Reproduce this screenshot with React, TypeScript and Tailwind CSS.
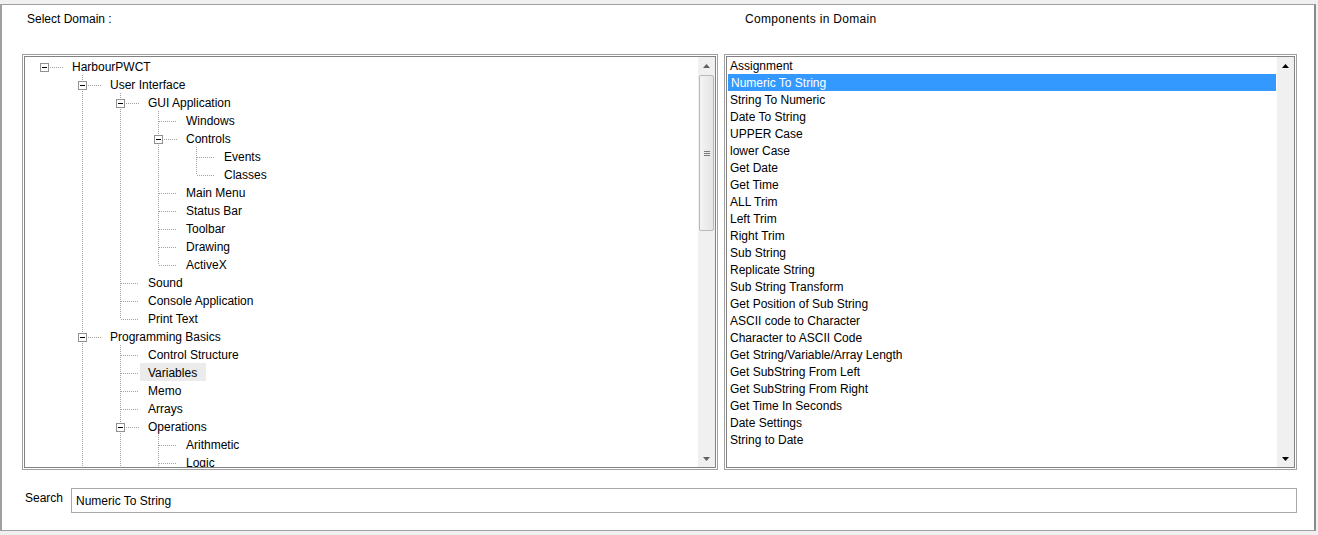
type TreeNode = { label: string; children?: TreeNode[] };

const tree: TreeNode[] = [
  {
    label: "HarbourPWCT",
    children: [
      {
        label: "User Interface",
        children: [
          {
            label: "GUI Application",
            children: [
              { label: "Windows" },
              { label: "Controls", children: [{ label: "Events" }, { label: "Classes" }] },
              { label: "Main Menu" },
              { label: "Status Bar" },
              { label: "Toolbar" },
              { label: "Drawing" },
              { label: "ActiveX" },
            ],
          },
          { label: "Sound" },
          { label: "Console Application" },
          { label: "Print Text" },
        ],
      },
      {
        label: "Programming Basics",
        children: [
          { label: "Control Structure" },
          { label: "Variables" },
          { label: "Memo" },
          { label: "Arrays" },
          {
            label: "Operations",
            children: [{ label: "Arithmetic" }, { label: "Logic" }, { label: "Relational" }],
          },
          { label: "Functions" },
        ],
      },
      { label: "Database" },
    ],
  },
];

const components = [
  "Assignment",
  "Numeric To String",
  "String To Numeric",
  "Date To String",
  "UPPER Case",
  "lower Case",
  "Get Date",
  "Get Time",
  "ALL Trim",
  "Left Trim",
  "Right Trim",
  "Sub String",
  "Replicate String",
  "Sub String Transform",
  "Get Position of Sub String",
  "ASCII code to Character",
  "Character to ASCII Code",
  "Get String/Variable/Array Length",
  "Get SubString From Left",
  "Get SubString From Right",
  "Get Time In Seconds",
  "Date Settings",
  "String to Date",
];

type Row = {
  label: string;
  depth: number;
  box: boolean;
  top: boolean;
  bottom: boolean;
  through: boolean[];
};

const flatten = (nodes: TreeNode[], depth: number, through: boolean[], out: Row[]) => {
  nodes.forEach((n, i) => {
    const hasNext = i < nodes.length - 1;
    out.push({
      label: n.label,
      depth,
      box: !!n.children,
      top: depth > 0 || i > 0,
      bottom: hasNext,
      through,
    });
    if (n.children) flatten(n.children, depth + 1, [...through, hasNext], out);
  });
  return out;
};

const rows = flatten(tree, 0, [], []);

const LINE = "#a0a0a0";

// one 38px indent column of the tree: dotted connector lines and the +/- box
const Cell = ({ row, col }: { row: Row; col: number }) => {
  const own = col === row.depth;
  return (
    <svg width="38" height="18" className="shrink-0" shapeRendering="crispEdges">
      {!own && row.through[col] && (
        <line x1="19.5" y1="0" x2="19.5" y2="18" stroke={LINE} strokeDasharray="1 1" />
      )}
      {own && row.top && <line x1="19.5" y1="0" x2="19.5" y2="10" stroke={LINE} strokeDasharray="1 1" />}
      {own && row.bottom && (
        <line x1="19.5" y1="10" x2="19.5" y2="18" stroke={LINE} strokeDasharray="1 1" />
      )}
      {own && (
        <line
          x1={row.box ? 25 : 20}
          y1="10.5"
          x2="38"
          y2="10.5"
          stroke={LINE}
          strokeDasharray="1 1"
        />
      )}
      {own && row.box && (
        <g>
          <rect x="15.5" y="6.5" width="8" height="8" fill="#fff" stroke="#919191" />
          <line x1="17" y1="10.5" x2="22" y2="10.5" stroke="#000" />
        </g>
      )}
    </svg>
  );
};

const Scrollbar = ({ thumb }: { thumb?: boolean }) => (
  <div className="w-[17px] shrink-0 bg-[#f0f0f0] flex flex-col items-center">
    <div className="h-[17px] w-full flex items-center justify-center">
      <svg width="7" height="4">
        <path d="M3.5 0 L7 4 L0 4 Z" fill={thumb ? "#606060" : "#000"} />
      </svg>
    </div>
    {thumb && (
      <div className="mt-[1px] h-[156px] w-[15px] rounded-[2px] border border-[#b8b8b8] bg-gradient-to-r from-[#f4f4f4] to-[#e4e4e4] flex flex-col items-center justify-center gap-[1px]">
        <div className="h-px w-[6px] bg-[#7a7a7a]" />
        <div className="h-px w-[6px] bg-[#7a7a7a]" />
        <div className="h-px w-[6px] bg-[#7a7a7a]" />
      </div>
    )}
    <div className="flex-1" />
    <div className="h-[17px] w-full flex items-center justify-center">
      <svg width="7" height="4">
        <path d="M0 0 L7 0 L3.5 4 Z" fill={thumb ? "#606060" : "#000"} />
      </svg>
    </div>
  </div>
);

const Frame = ({ children, className }: { children: React.ReactNode; className?: string }) => (
  <div className={`border border-[#a0a0a0] bg-white p-px ${className ?? ""}`}>
    <div className="h-full border border-[#828282] flex overflow-hidden">{children}</div>
  </div>
);

export default function App() {
  return (
    <div
      className="w-[1318px] h-[535px] bg-[#f0f0f0] pt-[4px] pr-[2px] pb-[4px] text-[12px] text-black"
      style={{ fontFamily: '"Liberation Sans", Arial, sans-serif' }}
    >
      <div className="h-full bg-white border-t border-t-[#a0a0a0] border-l-2 border-l-[#a0a0a0] border-r-2 border-r-[#8a8a8a] border-b border-b-[#a0a0a0] flex flex-col">
        <div className="h-[49px] flex pl-[20px] pr-[17px]">
          <div className="w-[702px] pl-[5px] pt-[7px] leading-[14px]">Select Domain :</div>
          <div className="flex-1 pl-[21px] pt-[7px] leading-[14px] tracking-[0.3px]">Components in Domain</div>
        </div>

        <div className="h-[416px] flex gap-[6px] pl-[20px] pr-[17px]">
          <Frame className="w-[696px]">
            <div className="flex-1 overflow-hidden">
              {rows.map((r, i) => (
                <div key={i} className="h-[18px] flex items-start">
                  {Array.from({ length: r.depth + 1 }).map((_, c) => (
                    <Cell key={c} row={r} col={c} />
                  ))}
                  <div
                    className={`h-[18px] ml-px pl-[8px] pr-[9px] leading-[20px] whitespace-nowrap ${
                      r.label === "Variables" ? "bg-[#ebebeb]" : ""
                    }`}
                  >
                    {r.label}
                  </div>
                </div>
              ))}
            </div>
            <Scrollbar thumb />
          </Frame>

          <Frame className="flex-1">
            <div className="flex-1 overflow-hidden">
              {components.map((c) => (
                <div
                  key={c}
                  className={`h-[17px] pl-[3px] leading-[19px] whitespace-nowrap ${
                    c === "Numeric To String" ? "bg-[#3399ff] text-white ml-px mr-px pl-[2px]" : ""
                  }`}
                >
                  {c}
                </div>
              ))}
            </div>
            <Scrollbar />
          </Frame>
        </div>

        <div className="mt-[18px] h-[25px] flex pl-[23px] pr-[17px]">
          <div className="w-[46px] leading-[14px] pt-[3px]">Search</div>
          <div className="flex-1 border border-[#a9a9a9] pl-[4px] leading-[25px]">Numeric To String</div>
        </div>
      </div>
    </div>
  );
}
